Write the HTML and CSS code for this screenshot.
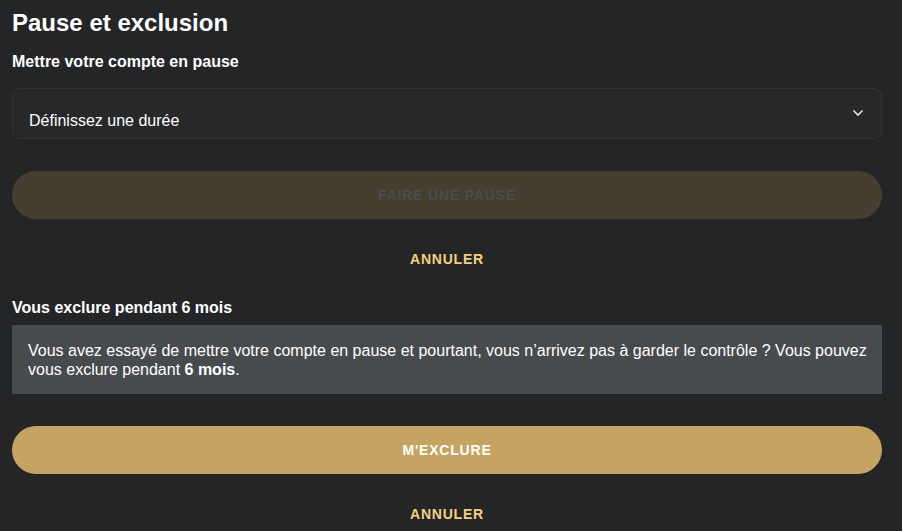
FILE: index.html
```html
<!DOCTYPE html>
<html lang="fr">
<head>
  <meta charset="UTF-8" />
  <meta name="viewport" content="width=device-width, initial-scale=1.0"/>
  <title>Pause et exclusion</title>
  <link rel="stylesheet" href="styles.css">
</head>
<body>
  <div class="container">
    <h1>Pause et exclusion</h1>

    <section class="block">
      <h2>Mettre votre compte en pause</h2>
      <div class="select">
        <span>Définissez une durée</span>
        <svg class="chevron" width="12" height="8" viewBox="0 0 12 8">
          <path d="M1.5 1.5 L6 6 L10.5 1.5" fill="none" stroke="#e6e6e6" stroke-width="1.6"/>
        </svg>
      </div>
      <button class="btn btn-disabled" disabled>Faire une pause</button>
      <div class="cancel">Annuler</div>
    </section>

    <section class="block block-exclude">
      <h2>Vous exclure pendant 6 mois</h2>
      <div class="info">
        Vous avez essayé de mettre votre compte en pause et pourtant, vous n’arrivez pas à garder le contrôle ? Vous pouvez vous exclure pendant <strong>6 mois</strong>.
      </div>
      <button class="btn btn-primary">M'exclure</button>
      <div class="cancel">Annuler</div>
    </section>
  </div>
</body>
</html>
```

FILE: styles.css
```css
* {
  box-sizing: border-box;
  font-family: 'Liberation Sans', Arial, sans-serif;
}

body {
  margin: 0;
  background: #242527;
  color: #fff;
}

.container {
  padding: 9px 20px 0 12px;
}

h1 {
  margin: 0;
  font-size: 24px;
  line-height: 28px;
  font-weight: bold;
}

h2 {
  margin: 0;
  font-size: 16px;
  line-height: 20px;
  font-weight: bold;
}

.block h2 {
  margin-top: 15px;
}

.block-exclude h2 {
  margin-top: 30px;
}

.select {
  margin-top: 16px;
  height: 51px;
  border: 1px solid #323436;
  border-radius: 8px;
  background: #262829;
  display: flex;
  justify-content: space-between;
  padding: 0 16px;
  font-size: 16px;
  color: #fff;
}

.select span {
  padding-top: 23px;
}

.chevron {
  margin-top: 20px;
  margin-right: 1px;
}

.btn {
  display: block;
  width: 100%;
  height: 48px;
  border: none;
  border-radius: 24px;
  font-size: 14px;
  font-weight: bold;
  text-transform: uppercase;
  letter-spacing: 0.8px;
}

.btn-disabled {
  margin-top: 32px;
  background: #463f31;
  color: #4b4c4d;
}

.btn-primary {
  margin-top: 32px;
  background: #c5a462;
  color: #fff;
  cursor: pointer;
}

.cancel {
  text-align: center;
  font-size: 14px;
  font-weight: bold;
  letter-spacing: 0.8px;
  text-transform: uppercase;
  color: #f5cf7d;
  margin-top: 32px;
  line-height: 17px;
}

.info {
  margin-top: 7px;
  background: #484b4d;
  padding: 16px 10px 15px 16px;
  font-size: 16px;
  line-height: 19px;
}
```
